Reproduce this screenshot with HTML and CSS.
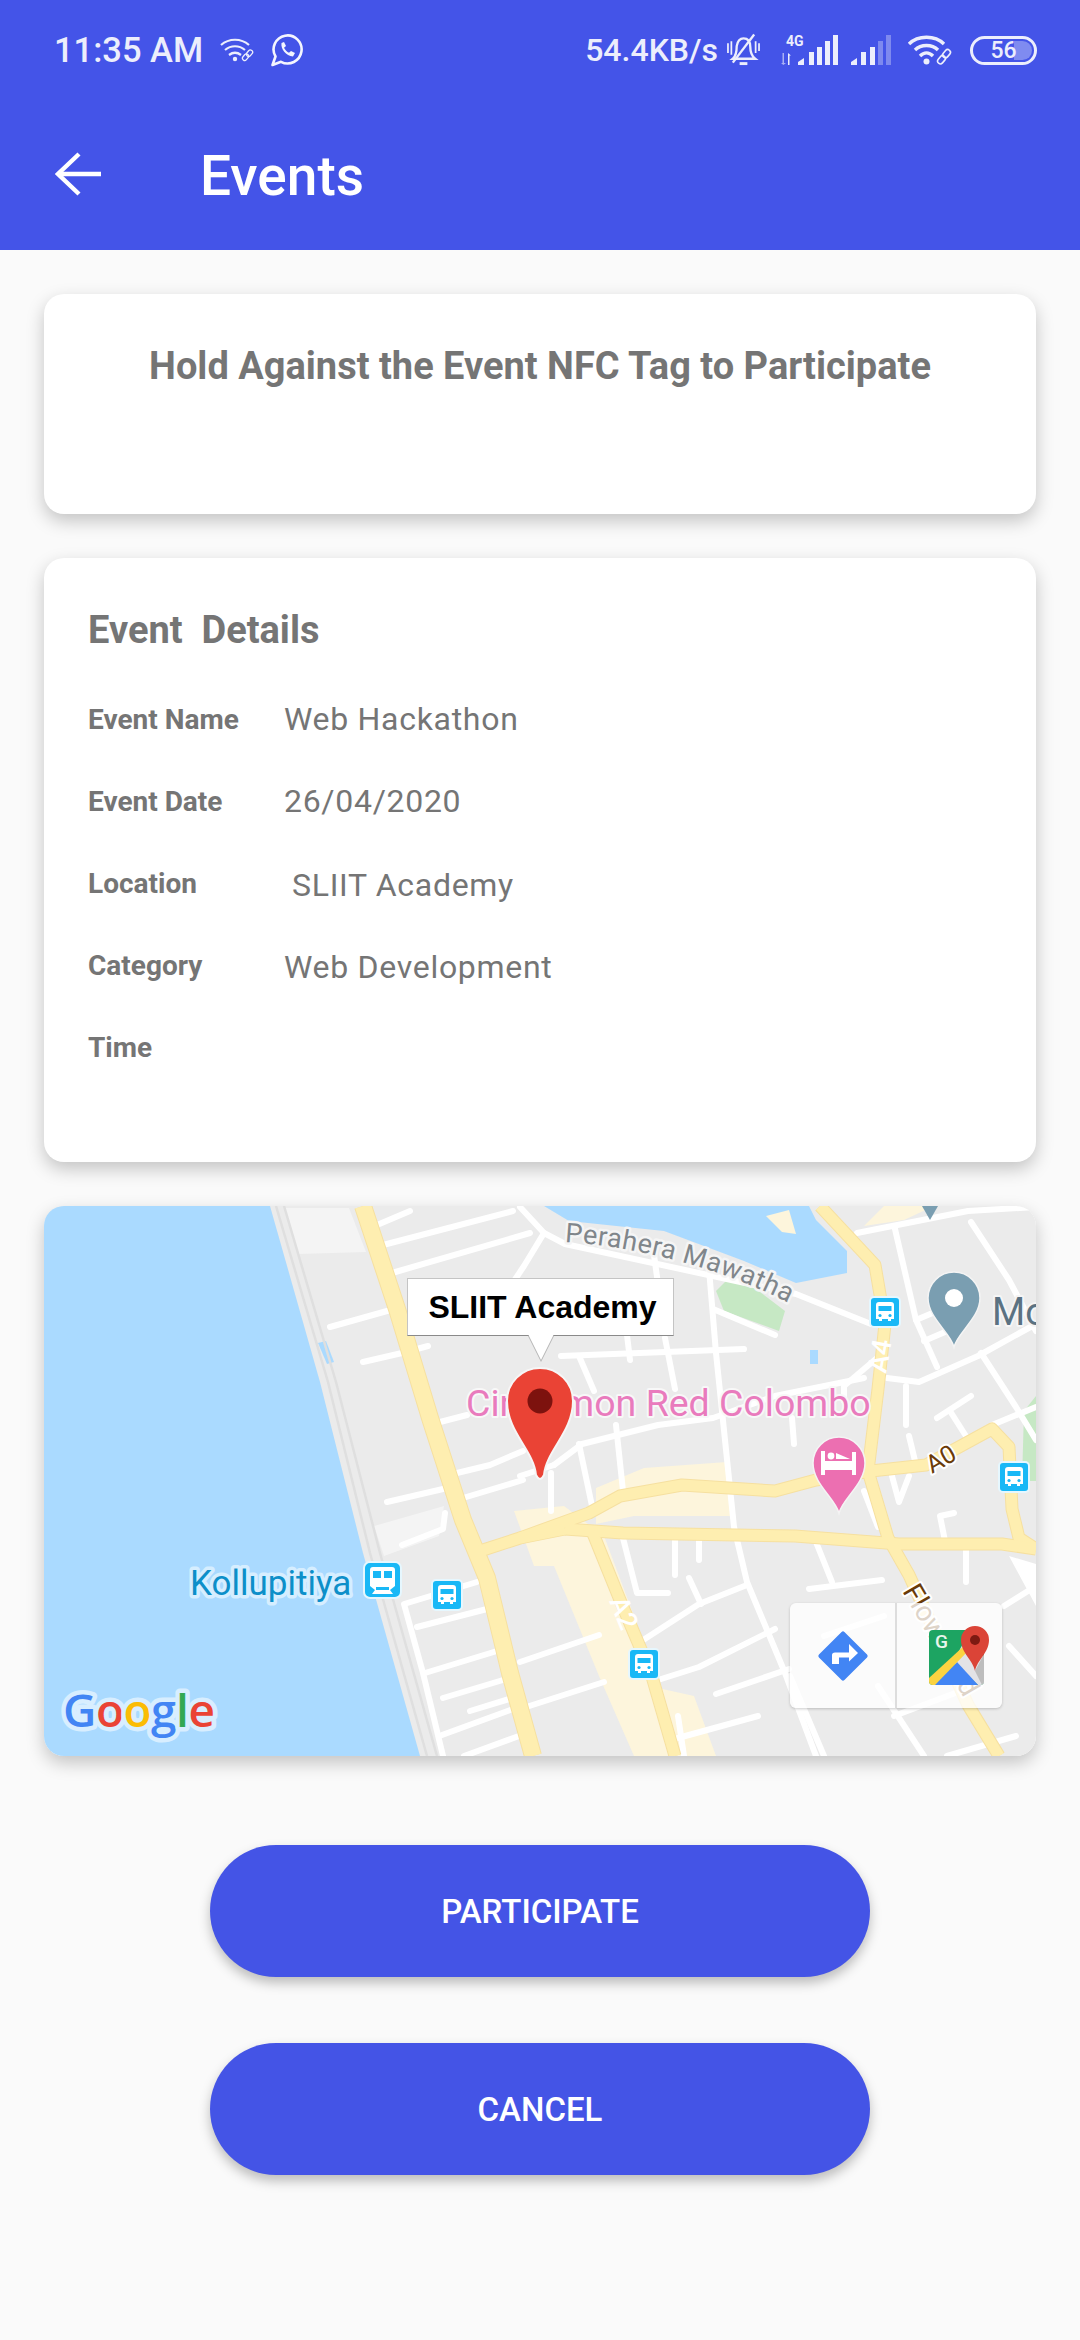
FILE: index.html
```html
<!DOCTYPE html>
<html lang="en">
<head>
    <meta charset="UTF-8">
    <meta name="viewport" content="width=device-width, initial-scale=1.0">
    <title>Events</title>
    <link rel="stylesheet" href="styles.css">
</head>
<body>
    <header class="header">
        <div class="status-bar">
            <div class="status-left">
                <span class="clock">11:35 AM</span>
                <svg class="icon-wifi-small" viewBox="0 0 34 24" fill="none" stroke="#eceefc" stroke-width="2.2">
                    <path d="M1 7 C9 0 21 0 29 7"/>
                    <path d="M5 12 C11 7 19 7 25 12"/>
                    <path d="M9 17 C13 14 17 14 21 17"/>
                    <circle cx="15" cy="21" r="2.2" fill="#eceefc" stroke="none"/>
                    <rect x="22" y="17" width="7" height="4.500" rx="2.200" stroke-width="1.300" transform="rotate(-50 25.500 19.200)"/>
                    <rect x="26" y="13" width="7" height="4.500" rx="2.200" stroke-width="1.300" transform="rotate(-50 29.500 15.200)"/>
                </svg>
                <svg class="icon-whatsapp" viewBox="0 0 34 34" fill="none" stroke="#f4f5fe" stroke-width="2.6">
                    <path d="M2.500 32 L5.500 23.500 A14 14 0 1 1 11 28.800 Z" stroke-linejoin="round"/>
                    <path d="M11.500 10 C10.500 16 16 23 23 23.500 L25 20 L21 18 L19 19.800 C17 19 15 17 14 14.800 L16 13 L14 9 Z" fill="#f4f5fe" stroke="none"/>
                </svg>
            </div>
            <div class="status-right">
                <span class="speed">54.4KB/s</span>
                <svg class="icon-bell" viewBox="0 0 34 34" fill="none" stroke="#eceefc" stroke-width="2.4">
                    <path d="M6 26 C10 23 10 17 10 13 C11 7 14 5 17 5 C22 5 24 9 24 14 C24 19 25 23 29 26 Z"/>
                    <path d="M28 1 L6 30"/>
                    <path d="M13 31 H21" stroke-width="3"/>
                    <path d="M1 10 V20 M4.500 8 V22 M29.500 8 V20 M33 10 V18" stroke-width="1.800"/>
                </svg>
                <svg class="icon-signal-one" viewBox="0 0 58 30" fill="#eceefc">
                    <text class="net-label" x="5" y="11">4G</text>
                    <path d="M1.500 18 h1.500 v10 h2 l-2.700 2 l-2.300 -2 h1.500z" opacity="0.6"/>
                    <path d="M7 30 v-12 l3 2.500 h-1.500 v9.500z"/>
                    <path d="M17 30 v-3 l6 -4 v7z M28 30 v-13 h5 v13z M36 30 v-18 h5 v18z M44 30 v-24 h5 v24z M52 30 v-30 h5 v30z"/>
                </svg>
                <svg class="icon-signal-two" viewBox="0 0 40 30" fill="#eceefc">
                    <path d="M0 30 v-3 l6 -4 v7z M10 30 v-13 h5 v13z M19 30 v-18 h5 v18z"/>
                    <path d="M27 30 v-24 h5 v24z M35 30 v-30 h5 v30z" opacity="0.35"/>
                </svg>
                <svg class="icon-wifi-big" viewBox="0 0 46 30" fill="none" stroke="#eceefc" stroke-width="3.4">
                    <path d="M2 9 C11 0 28 0 37 9"/>
                    <path d="M8 15 C14 9 25 9 31 15"/>
                    <path d="M13 21 C17 17 22 17 26 21"/>
                    <circle cx="19.500" cy="26.500" r="3" fill="#eceefc" stroke="none"/>
                    <rect x="30" y="22" width="9" height="5.500" rx="2.700" stroke-width="1.600" transform="rotate(-50 34.500 24.700)"/>
                    <rect x="35" y="16" width="9" height="5.500" rx="2.700" stroke-width="1.600" transform="rotate(-50 39.500 18.700)"/>
                </svg>
                <div class="battery"><span class="battery-fill"></span><span class="battery-level">56</span></div>
            </div>
        </div>
        <div class="toolbar">
            <svg class="icon-back" viewBox="0 0 46 44" fill="none" stroke="#fff" stroke-width="4.4">
                <path d="M24 2 L3 22 L24 42"/>
                <path d="M3 22 H46"/>
            </svg>
            <h1>Events</h1>
        </div>
    </header>

    <main class="content">
        <section class="card nfc-card">
            <h2>Hold Against the Event NFC Tag to Participate</h2>
        </section>

        <section class="card details-card">
            <h3>Event&nbsp; Details</h3>
            <div class="row"><span class="label">Event Name</span><span class="value">Web Hackathon</span></div>
            <div class="row"><span class="label">Event Date</span><span class="value">26/04/2020</span></div>
            <div class="row"><span class="label">Location</span><span class="value value-low value-indent">SLIIT Academy</span></div>
            <div class="row"><span class="label">Category</span><span class="value value-low">Web Development</span></div>
            <div class="row"><span class="label">Time</span><span class="value"></span></div>
        </section>

        <section class="card map-card">
            <svg class="map" viewBox="0 0 992 550">
                <defs>
                    <path id="perahera" d="M521 36 C 590 40 680 62 750 100"/>
                    <clipPath id="gmaps-clip"><rect x="0" y="4" width="55" height="55" rx="4"/></clipPath>
                    <g id="bus">
                        <rect x="-15" y="-15" width="30" height="30" rx="4" fill="#19b8f6" stroke="#e6f7fe" stroke-width="2"/>
                        <path d="M-9 -7 Q-9 -10 -6 -10 H6 Q9 -10 9 -7 V7 H6 V9 H3 V7 H-3 V9 H-6 V7 H-9 Z" fill="#fff"/>
                        <rect x="-6.500" y="-6" width="13" height="5" fill="#19b8f6"/>
                        <circle cx="-5" cy="3.500" r="1.600" fill="#19b8f6"/>
                        <circle cx="5" cy="3.500" r="1.600" fill="#19b8f6"/>
                    </g>
                    <g id="hw-main">
                        <path d="M319 0 L353 103 L386 212 L419 314 L443 372 L466 467 L489 550"/>
                    </g>
                    <g id="hw-minor">
                        <path d="M476 332 L545 307 L576 290 L638 279 L731 285 L772 274 L827 265 L882 259 L948 223 L965 241 L968 303 L975 332 L992 343"/>
                        <path d="M521 323 L579 327 L751 330 L855 338 L958 338 L992 343"/>
                        <path d="M436 345 L476 332 L521 323"/>
                        <path d="M548 325 L576 394 L607 467 L631 550"/>
                        <path d="M776 0 L831 59 L841 118 L834 183 L824 265 L844 332 L865 369 L924 499 L955 550"/>
                    </g>
                </defs>

                <rect width="992" height="550" fill="#ebebeb"/>
                <!-- water -->
                <path d="M0 0 H226 L276 176 L319 347 L376 550 H0 Z" fill="#aadaff"/>
                <path d="M500 0 L525 15 L620 25 L700 55 L752 77 L803 67 L803 45 L772 14 L765 0 Z" fill="#aadaff"/>
                <path d="M722 10 L745 4 L752 28 L738 26 Z" fill="#fdf5dc"/>
                <path d="M274 137 L282 135 L290 156 L283 158 Z" fill="#aadaff"/>
                <rect x="766" y="144" width="8" height="14" fill="#aadaff"/>
                <!-- parks and built up areas -->
                <path d="M672 85 L685 72 L700 74 L741 105 L735 125 L680 105 Z" fill="#c6e8c4"/>
                <path d="M980 205 L992 190 V275 H978 Z" fill="#c6e8c4"/>
                <path d="M240 2 L305 2 L322 46 L254 48 Z" fill="#f4f4f4"/>
                <path d="M330 320 L400 300 L395 330 L340 350 Z" fill="#f4f4f4"/>
                <path d="M552 282 L600 262 L683 256 L688 310 L590 310 L552 318 Z" fill="#fdf5dc"/>
                <path d="M470 305 L520 300 L560 330 L590 410 L605 480 L650 490 L672 550 H590 L555 470 L510 360 L490 360 Z" fill="#fdf5dc"/>
                <path d="M840 0 H890 L860 14 L820 20 Z" fill="#fdf5dc"/>
                <!-- coast rail -->
                <g fill="none" stroke="#dfdfdf" stroke-width="2.500">
                    <path d="M232 0 L284 176 L326 347 L383 550"/>
                    <path d="M240 0 L292 176 L336 347 L393 550"/>
                </g>
                <path d="M965 350 L992 358 V400 Z" fill="#fff"/>
                <!-- minor roads -->
                <g class="roads">
                    <path d="M333 19 L366 5"/><path d="M339 39 L469 5"/><path d="M348 67 L486 27"/>
                    <path d="M286 121 L343 105"/><path d="M319 156 L358 147 L384 140"/>
                    <path d="M343 296 L399 283"/><path d="M419 292 L479 274"/>
                    <path d="M413 267 L446 259 L479 245"/><path d="M396 216 L423 209"/>
                    <path d="M358 339 L399 323 L401 307"/>
                    <path d="M433 376 L360 398 L379 467 L399 550"/>
                    <path d="M373 421 L443 403"/><path d="M381 467 L453 445"/>
                    <path d="M399 492 L459 474"/><path d="M398 529 L469 503"/>
                    <path d="M426 505 L475 490"/><path d="M420 550 L475 530"/>
                    <path d="M476 1 L500 27 L521 38 L752 88 L827 118"/>
                    <path d="M500 27 L480 60 L470 75"/>
                    <path d="M517 150 L700 143"/><path d="M669 103 L731 129"/>
                    <path d="M665 63 L672 147 L690 321 L703 376 L741 467 L772 550"/>
                    <path d="M621 132 L631 183"/><path d="M610 49 L614 78"/>
                    <path d="M583 129 L586 154"/><path d="M535 150 L550 185"/>
                    <path d="M510 259 L538 238 L614 219 L669 212 L731 190 L820 172"/>
                    <path d="M476 270 L510 259"/>
                    <path d="M572 219 L579 285"/><path d="M748 212 L750 238"/>
                    <path d="M535 238 L548 300"/><path d="M507 267 L507 305"/>
                    <path d="M631 332 L631 369"/><path d="M655 332 L655 354"/>
                    <path d="M579 332 L593 387 L624 387"/><path d="M645 372 L657 398"/>
                    <path d="M703 379 L655 398 L593 438"/>
                    <path d="M614 474 L655 461 L731 423"/><path d="M476 456 L555 429"/>
                    <path d="M476 503 L560 476"/><path d="M634 532 L714 510"/>
                    <path d="M672 488 L745 463"/><path d="M772 336 L788 376"/>
                    <path d="M765 383 L838 374"/><path d="M820 285 L834 321"/>
                    <path d="M910 307 L896 310 L901 335"/><path d="M922 343 L922 376"/>
                    <path d="M848 270 L855 296 L865 270"/><path d="M865 230 L872 259"/>
                    <path d="M862 180 L862 219"/>
                    <path d="M843 172 L875 176 L934 150 L992 118"/>
                    <path d="M851 23 L872 114 L893 161"/>
                    <path d="M813 27 L924 5 L992 1"/>
                    <path d="M937 147 L972 201 L992 234"/>
                    <path d="M927 16 L965 74 L992 125"/>
                    <path d="M948 219 L992 201"/><path d="M893 212 L927 190"/>
                    <path d="M906 205 L927 238"/>
                    <path d="M872 114 L905 100"/><path d="M880 135 L915 120"/>
                    <path d="M833 152 L800 180 L800 195"/>
                    <path d="M746 470 L780 550"/><path d="M834 480 L880 550"/>
                    <path d="M850 510 L930 480"/><path d="M903 550 L972 530"/>
                    <path d="M965 440 L992 470"/><path d="M960 400 L992 380"/>
                    <path d="M634 510 L640 550"/><path d="M780 430 L840 410"/>
                </g>
                <!-- main roads -->
                <use href="#hw-main" class="hw-edge hw-wide"/>
                <use href="#hw-minor" class="hw-edge"/>
                <use href="#hw-main" class="hw-fill hw-wide"/>
                <use href="#hw-minor" class="hw-fill"/>

                <!-- labels -->
                <text class="lbl lbl-road" font-size="27" transform="translate(842 168) rotate(-80)">A4</text>
                <text class="lbl lbl-road" font-size="27" transform="translate(565 395) rotate(68)">A2</text>
                <text class="lbl lbl-dark" font-size="25" transform="translate(888 268) rotate(-30)">A0</text>
                <text class="lbl lbl-dark" font-size="28" transform="translate(858 385) rotate(60)">Flower Rd</text>
                <text class="lbl lbl-street" font-size="27"><textPath href="#perahera">Perahera Mawatha</textPath></text>
                <text class="lbl lbl-hotel" x="422" y="210" font-size="37.500">Cinnamon Red Colombo</text>
                <text class="lbl lbl-station" x="146" y="389" font-size="35">Kollupitiya</text>
                <text class="lbl lbl-place" x="948" y="119" font-size="38">Mo</text>
                <text class="lbl google" x="19" y="521" font-size="46"><tspan fill="#4285f4">G</tspan><tspan fill="#ea4335">o</tspan><tspan fill="#fbbc05">o</tspan><tspan fill="#4285f4">g</tspan><tspan fill="#34a853">l</tspan><tspan fill="#ea4335">e</tspan></text>

                <!-- transit -->
                <g>
                    <rect x="320" y="356" width="37" height="36" rx="6" fill="#19b8f6" stroke="#e6f7fe" stroke-width="2"/>
                    <path d="M326 364 Q326 361 329 361 H348 Q351 361 351 364 V380 L346 384 L349 388 H328 L331 384 L326 380 Z" fill="#fff"/>
                    <rect x="329" y="365" width="8" height="7" fill="#19b8f6"/>
                    <rect x="340" y="365" width="8" height="7" fill="#19b8f6"/>
                    <rect x="332" y="381" width="13" height="3" fill="#19b8f6"/>
                </g>
                <use href="#bus" x="403" y="389"/>
                <use href="#bus" x="841" y="106"/>
                <use href="#bus" x="970" y="271"/>
                <use href="#bus" x="600" y="458"/>

                <!-- top of a pin cut by the edge -->
                <path d="M878 0 H894 L886 14 Z" fill="#7a9eb1"/>
                <!-- place pins -->
                <path d="M910 141 C906 126 884 112 884 92 A26 26 0 0 1 936 92 C936 112 914 126 910 141 Z" fill="#7a9eb1" stroke="#f4f4f4" stroke-width="1.500"/>
                <circle cx="910" cy="92" r="9" fill="#fff"/>
                <path d="M795 307 C791 292 769 278 769 257 A26 26 0 0 1 821 257 C821 278 799 292 795 307 Z" fill="#ec6fb1" stroke="#f4f4f4" stroke-width="1.500"/>
                <path d="M777 245 H781 V255 H808 V246 H812 V269 H808 V264 H781 V269 H777 Z" fill="#fff"/>
                <circle cx="787" cy="250" r="3.400" fill="#fff"/>
                <path d="M792 247 L806 253 H792 Z" fill="#fff"/>
                <!-- selected marker -->
                <path d="M492 269 Q496 277 500 269 C502 245 529 226 529 195 A33 33 0 0 0 463 195 C463 226 490 245 492 269 Z" fill="#ea4335" stroke="#f6f6f6" stroke-width="2"/>
                <circle cx="496" cy="195" r="12.500" fill="#7d120e"/>
            </svg>

            <div class="marker-tip">
                <span>SLIIT Academy</span>
            </div>

            <div class="map-controls">
                <div class="map-control">
                    <svg class="icon-directions" viewBox="0 0 54 54">
                        <rect x="9" y="9" width="36" height="36" rx="2" fill="#4285f4" transform="rotate(45 27 27)"/>
                        <path d="M16 35 V26 Q16 23.500 19 23.500 H33 V15 L42 24 L33 32.500 V28.500 H23 V35 Z" fill="#fff"/>
                    </svg>
                </div>
                <div class="map-control">
                    <svg class="icon-gmaps" viewBox="0 0 60 60">
                        <g clip-path="url(#gmaps-clip)">
                            <rect x="0" y="4" width="55" height="55" fill="#1da462"/>
                            <path d="M36 14 L55 30 V59 H49 L24 36 Z" fill="#e3e3e6"/>
                            <path d="M46 45 L55 28 V59 H53 Z" fill="#bdbdbd"/>
                            <path d="M4 59 L28 36 L49 59 Z" fill="#4285f4"/>
                            <path d="M0 52 L36 19 L40 24 L6 59 H0 Z" fill="#fbd341"/>
                        </g>
                        <text class="gmaps-g" x="6" y="22">G</text>
                        <path d="M46 45 C44 34 32 27 32 14 A14 14 0 0 1 60 14 C60 27 48 34 46 45 Z" fill="#db4437"/>
                        <circle cx="46" cy="14" r="5" fill="#7d1a12"/>
                    </svg>
                </div>
            </div>
        </section>

        <div class="actions">
            <button type="button">PARTICIPATE</button>
            <button type="button">CANCEL</button>
        </div>
    </main>
</body>
</html>
```

FILE: styles.css
```css
* {
    box-sizing: border-box;
}

body {
    margin: 0;
    width: 1080px;
    height: 2340px;
    overflow: hidden;
    background-color: #fafafa;
    font-family: Roboto, "Liberation Sans", sans-serif;
}

.header {
    height: 250px;
    background-color: #4454e8;
    color: #fff;
}

.status-bar {
    height: 100px;
    padding: 0 43px 0 54px;
    display: flex;
    justify-content: space-between;
    align-items: center;
    color: #eceefc;
    font-weight: 500;
}

.status-left,
.status-right {
    display: flex;
    align-items: center;
}

.clock {
    font-size: 34.5px;
}

.icon-wifi-small {
    width: 34px;
    height: 24px;
    margin-left: 17px;
}

.icon-whatsapp {
    width: 34px;
    height: 34px;
    margin-left: 16px;
}

.speed {
    font-size: 32px;
}

.icon-bell {
    width: 33px;
    height: 34px;
    margin-left: 9px;
}

.icon-signal-one {
    width: 58px;
    height: 30px;
    margin-left: 21px;
    overflow: visible;
}

.net-label {
    font-size: 14px;
    font-weight: 700;
}

.icon-signal-two {
    width: 40px;
    height: 30px;
    margin-left: 12px;
}

.icon-wifi-big {
    width: 46px;
    height: 30px;
    margin-left: 16px;
}

.battery {
    position: relative;
    width: 67px;
    height: 29px;
    margin-left: 17px;
    border: 3px solid #eceefc;
    border-radius: 15px;
    text-align: center;
}

.battery-fill {
    position: absolute;
    right: 2px;
    top: 2px;
    bottom: 2px;
    width: 18px;
    border-radius: 0 10px 10px 0;
    background-color: #7f8bf0;
}

.battery-level {
    position: relative;
    display: block;
    font-size: 23px;
    line-height: 23px;
}

.toolbar {
    height: 150px;
    padding-left: 55px;
    display: flex;
    align-items: center;
}

.icon-back {
    width: 46px;
    height: 44px;
    margin-bottom: 3px;
}

.toolbar h1 {
    margin: 1px 0 0 99px;
    font-size: 55px;
    font-weight: 500;
}

.content {
    padding: 44px 44px 0;
}

.card {
    background-color: #fff;
    border-radius: 20px;
    box-shadow: 0 7px 18px rgba(0, 0, 0, 0.22);
    margin-bottom: 44px;
    color: #757575;
}

.nfc-card {
    height: 220px;
    padding-top: 51px;
    text-align: center;
}

.nfc-card h2 {
    margin: 0;
    font-size: 38px;
    line-height: 42px;
    font-weight: 700;
}

.details-card {
    height: 604px;
    padding: 50px 44px 0;
}

.details-card h3 {
    margin: 0 0 26px;
    font-size: 38px;
    line-height: 44px;
    font-weight: 700;
}

.row {
    display: flex;
    align-items: center;
    height: 82px;
}

.label {
    width: 196px;
    font-size: 28px;
    font-weight: 700;
}

.value {
    font-size: 32px;
    letter-spacing: 0.7px;
    color: #757575;
}

.value-low {
    padding-top: 4px;
}

.value-indent {
    padding-left: 8px;
}

.map-card {
    position: relative;
    height: 550px;
    overflow: hidden;
    margin-bottom: 0;
}

.map {
    display: block;
    width: 992px;
    height: 550px;
}

.roads path {
    fill: none;
    stroke: #fff;
    stroke-width: 6;
    stroke-linecap: round;
    stroke-linejoin: round;
}

.hw-edge,
.hw-fill {
    fill: none;
    stroke-linejoin: round;
}

.hw-edge {
    stroke: #f6e0a0;
    stroke-width: 13;
}

.hw-fill {
    stroke: #feeeb0;
    stroke-width: 11;
}

.hw-edge.hw-wide {
    stroke-width: 18;
}

.hw-fill.hw-wide {
    stroke-width: 16;
}

.lbl {
    paint-order: stroke;
    stroke-linejoin: round;
}

.lbl-road {
    fill: #fff;
    font-weight: 500;
}

.lbl-dark {
    fill: #6a3b08;
    stroke: #fff;
    stroke-width: 4;
}

.lbl-street {
    fill: #80868b;
    stroke: #f5f5f5;
    stroke-width: 5;
    letter-spacing: 0.5px;
}

.lbl-hotel {
    fill: #e97bbd;
    stroke: #f8f8f8;
    stroke-width: 4;
}

.lbl-station {
    fill: #0d8fc9;
    stroke: #d6eeff;
    stroke-width: 7;
}

.lbl-place {
    fill: #5b7282;
    stroke: #f5f5f5;
    stroke-width: 4;
}

.google {
    font-family: "Open Sans", sans-serif;
    font-weight: 600;
    letter-spacing: -0.5px;
    stroke: #d8eeff;
    stroke-width: 9;
}

.gmaps-g {
    font-size: 19px;
    font-weight: 500;
    fill: #e8f5ec;
}

.marker-tip {
    position: absolute;
    left: 363px;
    top: 72px;
    width: 267px;
    height: 58px;
    padding-left: 4px;
    background-color: #fff;
    border: 1px solid #c4c4c4;
    border-bottom-color: #8a8a8a;
    text-align: center;
    font-family: "Liberation Sans", sans-serif;
    font-size: 32px;
    font-weight: 700;
    line-height: 56px;
    color: #000;
}

.marker-tip::before,
.marker-tip::after {
    content: "";
    position: absolute;
    width: 0;
    height: 0;
    border-left: 13px solid transparent;
    border-right: 13px solid transparent;
}

.marker-tip::before {
    left: 120px;
    top: 57px;
    border-top: 26px solid #b5b5b5;
}

.marker-tip::after {
    left: 120px;
    top: 55px;
    border-top: 26px solid #fff;
}

.map-controls {
    position: absolute;
    left: 746px;
    top: 397px;
    width: 212px;
    height: 105px;
    display: flex;
    border-radius: 6px;
    background-color: rgba(255, 255, 255, 0.78);
    box-shadow: 0 1px 3px rgba(0, 0, 0, 0.2);
}

.map-control {
    flex: 1;
    display: flex;
    align-items: center;
    justify-content: center;
}

.map-control + .map-control {
    border-left: 2px solid #dddddd;
}

.icon-directions {
    width: 54px;
    height: 54px;
}

.icon-gmaps {
    width: 60px;
    height: 60px;
    margin-left: 18px;
}

.actions {
    padding-top: 89px;
    display: flex;
    flex-direction: column;
    align-items: center;
    gap: 66px;
}

button {
    width: 660px;
    height: 132px;
    border: none;
    border-radius: 66px;
    background-color: #4454e6;
    color: #fff;
    font-family: Roboto, sans-serif;
    font-size: 33px;
    font-weight: 500;
    box-shadow: 0 6px 12px rgba(0, 0, 0, 0.25);
    cursor: pointer;
}
```
